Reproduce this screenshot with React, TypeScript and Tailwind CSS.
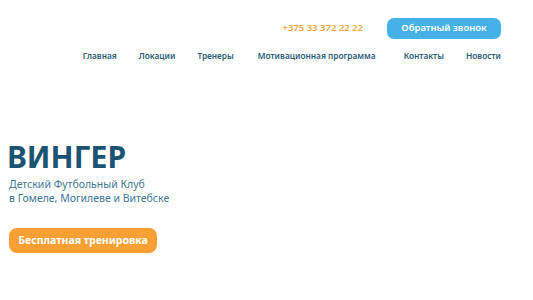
const nav = ["Главная", "Локации", "Тренеры", "Мотивационная программа", "Контакты", "Новости"];

export default function App() {
  return (
    <div className="h-[300px] w-[533px] overflow-hidden bg-white font-['Noto_Sans',sans-serif]">
      <header className="flex flex-col items-end pr-[32px] pt-[18px]">
        <div className="flex items-center">
          <a className="text-[9.5px] font-semibold text-[#f7a63c]">+375 33 372 22 22</a>
          <button className="ml-[24px] h-[21px] w-[114px] rounded-[7px] bg-[#46b1e6] text-[9.5px] font-semibold text-white">
            Обратный звонок
          </button>
        </div>
        <nav className="mt-[11px] flex text-[8.3px] font-semibold text-[#2b5d78]">
          <a className="mr-[22px]">{nav[0]}</a>
          <a className="mr-[22px]">{nav[1]}</a>
          <a className="mr-[24px]">{nav[2]}</a>
          <a className="mr-[28px]">{nav[3]}</a>
          <a className="mr-[22px]">{nav[4]}</a>
          <a>{nav[5]}</a>
        </nav>
      </header>

      <section className="pl-[7px] pt-[78px]">
        <h1 className="text-[30px] font-bold leading-[34px] text-[#1b5472]">ВИНГЕР</h1>
        <p className="mt-[3px] pl-[2px] text-[10.5px] leading-[14px] text-[#3c7896]">
          Детский Футбольный Клуб
          <br />
          в Гомеле, Могилеве и Витебске
        </p>
        <button className="ml-[2px] mt-[23px] h-[25px] w-[148px] rounded-[8px] bg-[#f9a035] text-[10.5px] font-bold text-white">
          Бесплатная тренировка
        </button>
      </section>
    </div>
  );
}
